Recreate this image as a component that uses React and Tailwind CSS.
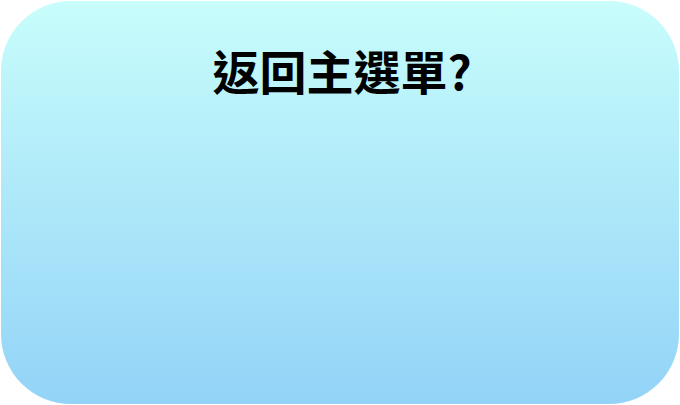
import React from 'react';

function App() {
  return (
    <div className="w-[680px] h-[405px] bg-white p-px">
      <div className="h-full w-full rounded-[70px] bg-gradient-to-b from-[#c8fdfb] to-[#93d3f7] flex flex-col items-center pt-[45px]">
        <h1
          className="text-[47px] leading-none font-bold text-black pl-[4px]"
          style={{ fontFamily: '"Noto Sans CJK TC", "Noto Sans CJK SC", sans-serif' }}
        >
          返回主選單?
        </h1>
      </div>
    </div>
  );
}

export default App;
